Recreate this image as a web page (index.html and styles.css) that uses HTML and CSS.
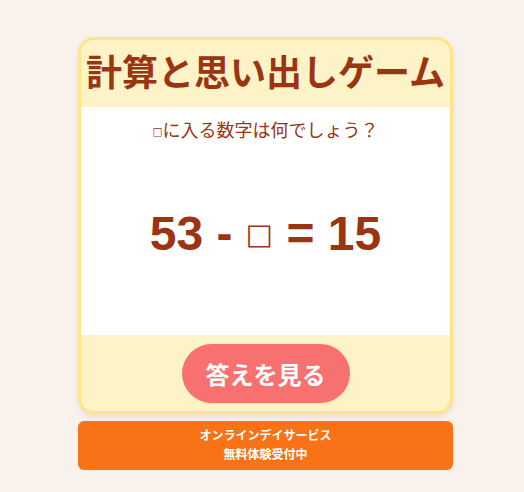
FILE: index.html
```html
<!DOCTYPE html>
<html lang="ja">
    <head>
        <meta charset="utf-8">
        <title>計算と思い出しゲーム</title>
        <link rel="stylesheet" href="styles.css">
    </head>
    <body>
        <div class="wrap">
            <div class="card">
                <h1 class="title">計算と思い出しゲーム</h1>
                <div class="question">
                    <p class="hint"><span class="blank">□</span>に入る数字は何でしょう？</p>
                    <p class="formula">53 - <span class="blank">□</span> = 15</p>
                </div>
                <div class="actions">
                    <div class="answer-btn">答えを見る</div>
                </div>
            </div>
            <div class="banner">
                <p>オンラインデイサービス</p>
                <p>無料体験受付中</p>
            </div>
        </div>
    </body>
</html>
```
FILE: styles.css
```css
body {
    margin: 0;
    background-color: #f9f1eb;
    font-family: "Liberation Sans", "Noto Sans CJK JP", sans-serif;
    color: #9a3412;
}

.wrap {
    width: 375px;
    margin-left: 78px;
    padding-top: 37px;
}

    /*main card*/

.card {
    background-color: #fef3c7;
    border: 3px solid #fde68a;
    border-radius: 16px;
    overflow: hidden;
    box-shadow: 0 3px 6px rgba(0, 0, 0, 0.08);
}

h1.title {
    margin: 0;
    padding: 14px 0 13px;
    font-size: 36px;
    line-height: 40px;
    font-weight: bold;
    text-align: center;
    white-space: nowrap;
}

.question {
    background-color: #ffffff;
    height: 228px;
    padding-top: 10px;
    box-sizing: border-box;
    text-align: center;
}

p.hint {
    margin: 0;
    font-size: 18px;
    line-height: 28px;
}

p.formula {
    margin: 64px 0 0;
    font-size: 48px;
    line-height: 48px;
    font-weight: bold;
}

    /*the empty square*/

span.blank {
    font-family: "DejaVu Sans", sans-serif;
    font-size: 0.6em;
    vertical-align: 0.2em;
}

    /*button area*/

.actions {
    display: flex;
    justify-content: center;
    padding: 9px 0 8px;
}

.answer-btn {
    width: 168px;
    height: 59px;
    border-radius: 30px;
    background-color: #f87171;
    color: #ffffff;
    font-size: 24px;
    font-weight: bold;
    display: flex;
    align-items: center;
    justify-content: center;
    cursor: pointer;
}

    /*bottom banner*/

.banner {
    margin-top: 7px;
    height: 49px;
    background-color: #f97316;
    border-radius: 6px;
    color: #ffffff;
    font-size: 12px;
    font-weight: bold;
    text-align: center;
    display: flex;
    flex-direction: column;
    justify-content: center;
}

.banner p {
    margin: 0;
    line-height: 19px;
}
```
